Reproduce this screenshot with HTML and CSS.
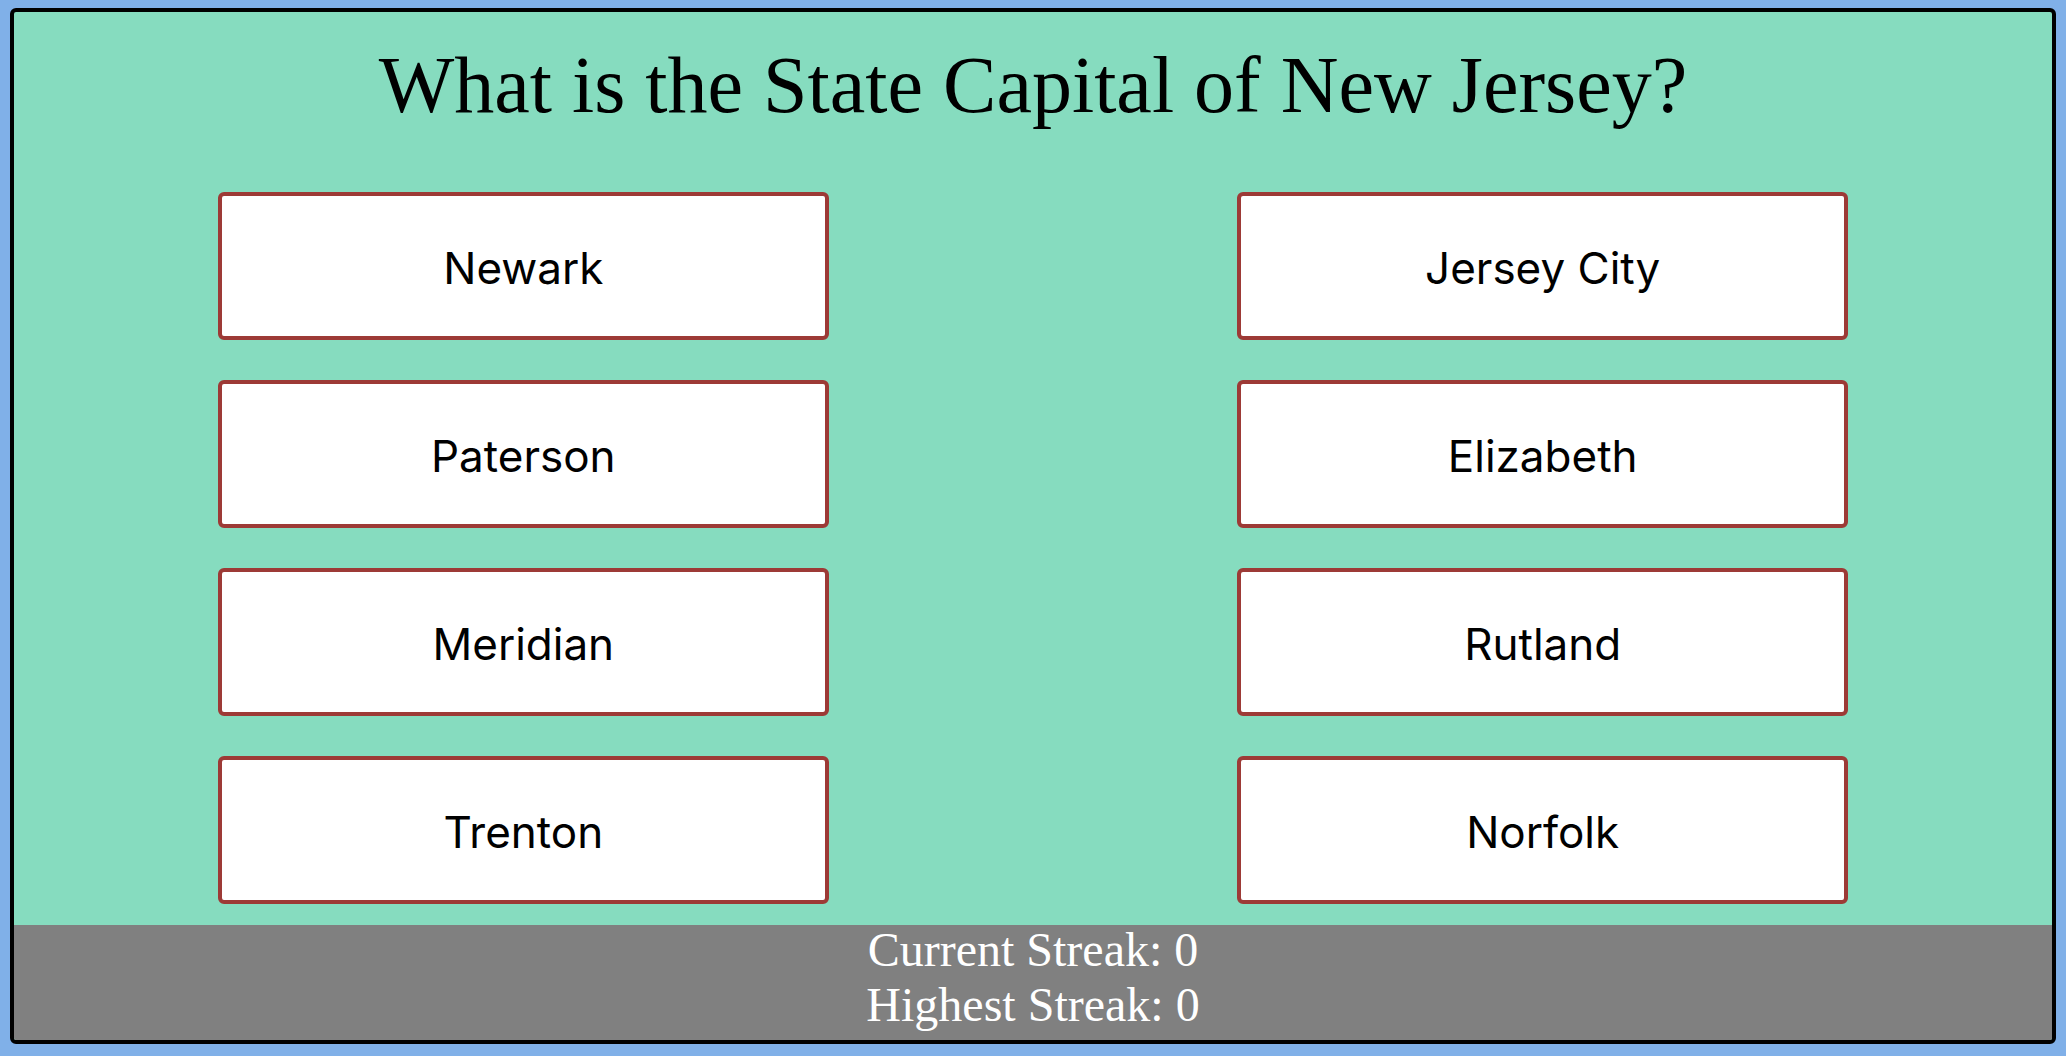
FILE: index.html
```html
<!DOCTYPE html>
<html lang="en">
<head>
<meta charset="utf-8">
<title>State Capital Quiz</title>
<link rel="stylesheet" href="styles.css">
</head>
<body>
<div class="app">
  <main class="quiz">
    <h1 class="question">What is the State Capital of New Jersey?</h1>
    <div class="answers">
      <button class="answer">Newark</button>
      <button class="answer">Jersey City</button>
      <button class="answer">Paterson</button>
      <button class="answer">Elizabeth</button>
      <button class="answer">Meridian</button>
      <button class="answer">Rutland</button>
      <button class="answer">Trenton</button>
      <button class="answer">Norfolk</button>
    </div>
  </main>
  <footer class="streaks">
    <div class="streak-lines">
      <div>Current Streak: 0</div>
      <div>Highest Streak: 0</div>
    </div>
  </footer>
</div>
</body>
</html>
```
FILE: styles.css
```css
html, body {
  height: 100%;
}
body {
  margin: 0;
  padding: 8px 10px 12px;
  box-sizing: border-box;
  background: #80b0e8;
  font-family: "Liberation Serif", "Times New Roman", serif;
}
.app {
  height: 100%;
  box-sizing: border-box;
  border: 4px solid #000;
  border-radius: 6px;
  background: #86dcbf;
  display: flex;
  flex-direction: column;
  overflow: hidden;
}
.quiz {
  flex: 1;
  display: flex;
  flex-direction: column;
  align-items: center;
}
.question {
  margin: 28px 0 0;
  font-size: 80px;
  font-weight: normal;
  line-height: normal;
  color: #000;
  text-align: center;
}
.answers {
  margin-top: 61px;
  width: 80%;
  display: grid;
  grid-template-columns: repeat(2, 611px);
  justify-content: space-between;
  row-gap: 40px;
}
.answer {
  height: 148px;
  box-sizing: border-box;
  background: #fff;
  border: 4px solid #9d3a36;
  border-radius: 6px;
  font-family: Inter, "Liberation Sans", Arial, sans-serif;
  font-size: 44px;
  color: #000;
  padding: 4px 0 0;
}
.streaks {
  height: 115px;
  background: #808080;
  color: #fff;
  text-align: center;
  font-size: 48px;
  line-height: 55px;
}
.streak-lines {
  margin-top: -3px;
}
```
